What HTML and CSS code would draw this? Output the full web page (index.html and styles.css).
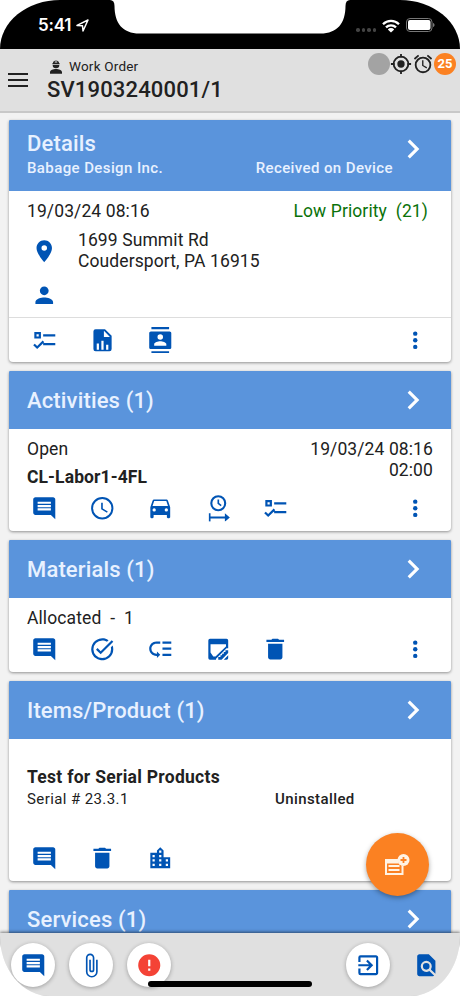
FILE: index.html
```html
<!DOCTYPE html>
<html lang="en">
  <head>
    <meta charset="UTF-8" />
    <meta name="viewport" content="width=device-width, initial-scale=1.0" />
    <title>Work Order</title>
    <link rel="stylesheet" href="styles.css">
  </head>
  <body>
    <!-- Icon set -->
    <svg class="sprite" aria-hidden="true">
      <symbol id="chevron" viewBox="0 0 24 24"><path d="M8.600 16.600 13.200 12 8.600 7.400 10 6l6 6-6 6z" /></symbol>
      <symbol id="more" viewBox="0 0 24 24"><circle cx="12" cy="6" r="2" /><circle cx="12" cy="12" r="2" /><circle cx="12" cy="18" r="2" /></symbol>
      <symbol id="comment" viewBox="0 0 24 24"><path d="M21.99 4c0-1.1-.89-2-1.99-2H4c-1.1 0-2 .9-2 2v12c0 1.1.9 2 2 2h14l4 4-.01-18zM18 14H6v-2h12v2zm0-3H6V9h12v2zm0-3H6V6h12v2z" /></symbol>
      <symbol id="checklist" viewBox="0 0 24 24"><path fill-rule="evenodd" d="M3 4.500h6v6H3zM5 6.500v2h2v-2zM11 6.500h11v2H11zM11 14.500h11v2H11zM2 16.500l1.400-1.400 2.200 2.200L10.600 12.300 12 13.700l-6.400 6.300z" /></symbol>
      <symbol id="place" viewBox="0 0 24 24"><path d="M12 2C8.130 2 5 5.130 5 9c0 5.250 7 13 7 13s7-7.750 7-13c0-3.870-3.130-7-7-7zm0 9.500a2.500 2.500 0 0 1 0-5 2.500 2.500 0 0 1 0 5z" /></symbol>
      <symbol id="person" viewBox="0 0 24 24"><path d="M12 12c2.210 0 4-1.790 4-4s-1.790-4-4-4-4 1.790-4 4 1.790 4 4 4zm0 2c-2.670 0-8 1.340-8 4v2h16v-2c0-2.660-5.330-4-8-4z" /></symbol>
      <symbol id="report" viewBox="0 0 24 24"><path fill-rule="evenodd" d="M6 2h8.500l6 6v12a2 2 0 0 1-2 2H6a2 2 0 0 1-2-2V4a2 2 0 0 1 2-2zM13.500 3.500V9H19zM7 15v5.500h2V15zM11.200 12.500v8h2v-8zM15.500 16v4.500h2V16z" /></symbol>
      <symbol id="contacts" viewBox="0 0 24 24"><path d="M20 0H4v2h16V0zM4 24h16v-2H4v2zM20.500 4h-17C2.700 4 2 4.700 2 5.500v13c0 .800.700 1.500 1.500 1.500h17c.800 0 1.500-.700 1.500-1.500v-13c0-.800-.700-1.500-1.500-1.500zm-8.500 2.500a2.500 2.500 0 0 1 0 5 2.500 2.500 0 0 1 0-5zM17.500 17h-11v-1.500c0-1.670 3.500-2.700 5.500-2.700s5.500 1.030 5.500 2.700V17z" /></symbol>
      <symbol id="clock" viewBox="0 0 24 24"><circle cx="12" cy="12" r="9.200" fill="none" stroke="currentColor" stroke-width="1.800" /><path d="M11 7h1.500v5.250l4.500 2.670-.750 1.230L11 13z" /></symbol>
      <symbol id="car" viewBox="0 0 24 24"><path d="M18.920 5.010C18.720 4.420 18.160 4 17.500 4h-11c-.660 0-1.210.420-1.420 1.010L3 11v9c0 .550.450 1 1 1h1c.550 0 1-.450 1-1v-2h12v2c0 .550.450 1 1 1h1c.550 0 1-.450 1-1v-9l-2.080-5.990zM6.500 15a1.500 1.500 0 0 1 0-3 1.500 1.500 0 0 1 0 3zm11 0a1.500 1.500 0 0 1 0-3 1.500 1.500 0 0 1 0 3zM5 10l1.500-4.500h11L19 10H5z" /></symbol>
      <symbol id="time-span" viewBox="0 0 24 24"><circle cx="12" cy="7.500" r="6.300" fill="none" stroke="currentColor" stroke-width="1.900" /><path d="M11.300 4h1.500v3.300l2.300 1.700-.900 1.200-2.900-2.200zM3.500 16.500H5v3h13v-3l4.500 3.900-4.500 3.900v-3H5v3H3.500z" /></symbol>
      <symbol id="task-done" viewBox="0 0 24 24"><path d="M22 5.180 10.590 16.600l-4.240-4.240 1.410-1.410 2.830 2.830 10-10L22 5.180zM19.790 10.220c.130.570.210 1.160.210 1.780a8 8 0 1 1-8-8c1.580 0 3.040.460 4.280 1.250l1.440-1.440A10 10 0 1 0 22 12c0-1.190-.220-2.330-.600-3.390z" /></symbol>
      <symbol id="low-priority" viewBox="0 0 24 24"><path d="M14 5h8v2h-8zm0 5.500h8v2h-8zm0 5.500h8v2h-8zM2 11.500C2 15.080 4.920 18 8.500 18H9v2l3-3-3-3v2h-.500A4.510 4.510 0 0 1 4 11.500C4 9.020 6.020 7 8.500 7H12V5H8.500C4.920 5 2 7.920 2 11.500z" /></symbol>
      <symbol id="edit-window" viewBox="0 0 24 24"><path fill-rule="evenodd" d="M4.500 2.500h15A1.500 1.500 0 0 1 21 4v7h-1.500L10 20.500v1H4.500A1.500 1.500 0 0 1 3 20V4a1.500 1.500 0 0 1 1.500-1.500zM5 7.500v7.500l2.500 3.500h2l9.500-9V7.500z" /><path d="M21 13v2.500l-6 6h-3V19h2v-1.500h1.500V16H17v-1.500h1.500V13zM21 17.500V20a1.500 1.500 0 0 1-1.500 1.500H17z" /></symbol>
      <symbol id="trash" viewBox="0 0 24 24"><path d="M5.500 19.300c0 1.100.900 2 2 2h9c1.100 0 2-.900 2-2V7h-13v12.300zM20 3.500h-4.500l-1-1h-5l-1 1H4v2h16v-2z" /></symbol>
      <symbol id="city" viewBox="0 0 24 24"><path d="M15 11V5l-3-3-3 3v2H3v14h18V11h-6zm-8 8H5v-2h2v2zm0-4H5v-2h2v2zm0-4H5V9h2v2zm6 8h-2v-2h2v2zm0-4h-2v-2h2v2zm0-4h-2V9h2v2zm0-4h-2V5h2v2zm6 12h-2v-2h2v2zm0-4h-2v-2h2v2z" /></symbol>
      <symbol id="clip" viewBox="0 0 24 24"><path d="M16.600 6.500v10.800a4.600 4.600 0 0 1-9.200 0V4.800a3.100 3.100 0 0 1 6.200 0v10.700a1.600 1.600 0 0 1-3.200 0V6.500" transform="translate(.5 .5)" fill="none" stroke="currentColor" stroke-width="1.500" /></symbol>
      <symbol id="error" viewBox="0 0 24 24"><path d="M12 2a10 10 0 1 0 0 20 10 10 0 0 0 0-20zm1 15h-2v-2h2v2zm0-4h-2V7h2v6z" /></symbol>
      <symbol id="enter" viewBox="0 0 24 24"><path d="M10.090 15.590 11.500 17l5-5-5-5-1.410 1.410L12.670 11H3v2h9.670l-2.580 2.590zM19 3H5a2 2 0 0 0-2 2v4h2V5h14v14H5v-4H3v4a2 2 0 0 0 2 2h14c1.100 0 2-.900 2-2V5c0-1.100-.900-2-2-2z" /></symbol>
      <symbol id="find-page" viewBox="0 0 24 24"><path d="M20.300 19.590V8l-6-6H5.800c-1.100 0-2 .900-2 2v16c0 1.100.900 2 2 2H18c.450 0 .850-.150 1.190-.400l-4.430-4.430c-.800.520-1.740.830-2.760.830a5 5 0 1 1 5-5c0 1.020-.310 1.960-.830 2.750zM9 13a3 3 0 1 0 6 0 3 3 0 0 0-6 0z" /></symbol>
      <symbol id="worker" viewBox="0 0 24 24"><path d="M12 15c-4 0-9 1.500-9 4.700V22h18v-2.300C21 16.500 16 15 12 15zM7 9a5 5 0 0 0 10 0zM11.300 2h1.400v4h1V2.500C15.500 3 16.600 4.500 16.700 6.500h.800V8h-11V6.500h.800C7.400 4.500 8.500 3 10.300 2.500V6h1z" /></symbol>
      <symbol id="gps" viewBox="0 0 24 24"><circle cx="12" cy="12" r="8" fill="none" stroke="currentColor" stroke-width="2" /><circle cx="12" cy="12" r="4" /><path d="M11 1h2v4h-2zM11 19h2v4h-2zM1 11h4v2H1zM19 11h4v2h-4z" /></symbol>
      <symbol id="alarm" viewBox="0 0 24 24"><circle cx="12" cy="13" r="8" fill="none" stroke="currentColor" stroke-width="2" /><path d="m22 5.720-4.600-3.860-1.290 1.530 4.600 3.860zM7.880 3.390 6.600 1.860 2 5.710l1.290 1.530zM12.500 8H11v6l4.750 2.850.750-1.230-4-2.370z" /></symbol>
      <symbol id="add-list" viewBox="0 0 25 22"><path fill-rule="evenodd" d="M0 5h13a6 6 0 0 0 5.500 7v9H0zM2 9.500v9.500h14.500V9.500zM3.500 11h11v2h-11zM3.500 15h11v2h-11z" /><circle cx="18.500" cy="6" r="6" /><path d="M17.600 3h1.800v2.100h2.100v1.800h-2.100V9h-1.800V6.900h-2.100V5.100h2.100z" fill="#fb8122" /></symbol>
    </svg>

    <div class="phone">
      <div class="status-bar">
        <svg class="notch" viewBox="0 0 240 34"><path d="M0 0C3 0 4.500 2 4.500 6c0 17 8 27.500 25 27.500h181c17 0 25-10.500 25-27.500 0-4 1.500-6 4.500-6z" /></svg>
        <div class="status-time">
          <span>5:41</span>
          <svg width="13" height="13" viewBox="0 0 13 13"><path d="M1 6.400 12 1 7 12 6.500 6.700z" fill="none" stroke="#fff" stroke-width="1.500" stroke-linejoin="round" /></svg>
        </div>
        <div class="status-icons">
          <span class="dots"><i></i><i></i><i></i><i></i></span>
          <svg class="wifi" width="18" height="14" viewBox="0 0 18 14"><g fill="none" stroke="#fff" stroke-width="2.300"><path d="M1 5.200a11.300 11.300 0 0 1 16 0" /><path d="M4 8.400a7 7 0 0 1 10 0" /></g><path d="M9 13.500 5.800 10.400a4.500 4.500 0 0 1 6.400 0z" fill="#fff" /></svg>
          <svg width="29" height="15" viewBox="0 0 29 15"><rect x=".5" y=".5" width="25.500" height="13" rx="3.500" fill="none" stroke="#777" /><rect x="2" y="2" width="22.500" height="10" rx="2" fill="#fff" /><path d="M27 5c2 .500 2 3.500 0 4z" fill="#777" /></svg>
        </div>
      </div>

      <header class="app-header">
        <svg class="menu" width="20" height="14" viewBox="0 0 20 14"><path d="M0 0h20v2H0zM0 6h20v2H0zM0 12h20v2H0z" /></svg>
        <div class="heading">
          <div class="subtitle"><svg class="worker"><use href="#worker" /></svg>Work Order</div>
          <h1>SV1903240001/1</h1>
        </div>
        <div class="indicators">
          <span class="dot"></span>
          <svg class="indicator"><use href="#gps" /></svg>
          <svg class="indicator"><use href="#alarm" /></svg>
          <span class="count">25</span>
        </div>
      </header>

      <main class="content">
        <section class="card details">
          <div class="card-header tall">
            <div class="card-titles">
              <h2>Details</h2>
              <div class="card-meta"><span>Babage Design Inc.</span><span>Received on Device</span></div>
            </div>
            <svg class="chevron"><use href="#chevron" /></svg>
          </div>
          <div class="details-body">
            <div class="line"><span>19/03/24 08:16</span><span class="priority">Low Priority&nbsp; (21)</span></div>
            <div class="contact address">
              <svg class="icon"><use href="#place" /></svg>
              <p>1699 Summit Rd<br />Coudersport, PA 16915</p>
            </div>
            <div class="contact"><svg class="icon"><use href="#person" /></svg></div>
          </div>
          <div class="actions">
            <span><svg class="icon"><use href="#checklist" /></svg></span>
            <span><svg class="icon"><use href="#report" /></svg></span>
            <span><svg class="icon"><use href="#contacts" /></svg></span>
            <span class="more"><svg class="icon"><use href="#more" /></svg></span>
          </div>
        </section>

        <section class="card activities">
          <div class="card-header"><h2>Activities (1)</h2><svg class="chevron"><use href="#chevron" /></svg></div>
          <div class="activity-body">
            <div>Open<br /><b>CL-Labor1-4FL</b></div>
            <div class="activity-time">19/03/24 08:16<br />02:00</div>
          </div>
          <div class="actions">
            <span><svg class="icon"><use href="#comment" /></svg></span>
            <span><svg class="icon"><use href="#clock" /></svg></span>
            <span><svg class="icon"><use href="#car" /></svg></span>
            <span><svg class="icon"><use href="#time-span" /></svg></span>
            <span><svg class="icon"><use href="#checklist" /></svg></span>
            <span class="more"><svg class="icon"><use href="#more" /></svg></span>
          </div>
        </section>

        <section class="card materials">
          <div class="card-header"><h2>Materials (1)</h2><svg class="chevron"><use href="#chevron" /></svg></div>
          <div class="material-body">Allocated&nbsp; -&nbsp; 1</div>
          <div class="actions">
            <span><svg class="icon"><use href="#comment" /></svg></span>
            <span><svg class="icon"><use href="#task-done" /></svg></span>
            <span><svg class="icon"><use href="#low-priority" /></svg></span>
            <span><svg class="icon"><use href="#edit-window" /></svg></span>
            <span><svg class="icon"><use href="#trash" /></svg></span>
            <span class="more"><svg class="icon"><use href="#more" /></svg></span>
          </div>
        </section>

        <section class="card items">
          <div class="card-header"><h2>Items/Product (1)</h2><svg class="chevron"><use href="#chevron" /></svg></div>
          <div class="item-body">
            <b>Test for Serial Products</b>
            <div class="item-row"><span>Serial # 23.3.1</span><span class="state">Uninstalled</span></div>
          </div>
          <div class="actions">
            <span><svg class="icon"><use href="#comment" /></svg></span>
            <span><svg class="icon"><use href="#trash" /></svg></span>
            <span><svg class="icon"><use href="#city" /></svg></span>
          </div>
        </section>

        <section class="card">
          <div class="card-header"><h2>Services (1)</h2><svg class="chevron"><use href="#chevron" /></svg></div>
        </section>
      </main>

      <footer class="toolbar">
        <span class="tool"><span class="round"><svg class="icon"><use href="#comment" /></svg></span></span>
        <span class="tool"><span class="round"><svg class="icon"><use href="#clip" /></svg></span></span>
        <span class="tool"><span class="round alert"><svg class="icon"><use href="#error" /></svg></span></span>
        <span class="tool push"><span class="round"><svg class="icon"><use href="#enter" /></svg></span></span>
        <span class="tool"><svg class="icon"><use href="#find-page" /></svg></span>
      </footer>

      <div class="fab"><svg width="25" height="22"><use href="#add-list" /></svg></div>
      <div class="home-bar"></div>
    </div>
  </body>
</html>
```

FILE: styles.css
```css
* {
  margin: 0;
  padding: 0;
  box-sizing: border-box;
}

body {
  background: #fff;
  color: #212121;
  font-family: Roboto, "Liberation Sans", sans-serif;
  font-size: 17.5px;
  line-height: 21px;
  letter-spacing: 0.1px;
}

svg {
  display: block;
  flex-shrink: 0;
  fill: currentColor;
}

.sprite {
  position: absolute;
  width: 0;
  height: 0;
}

.phone {
  position: relative;
  display: flex;
  flex-direction: column;
  width: 460px;
  height: 996px;
  overflow: hidden;
  background: #f2f2f2;
  border-radius: 60px 60px 50px 50px / 49px 49px 60px 60px;
}

/* Status bar */
.status-bar {
  position: relative;
  display: flex;
  justify-content: space-between;
  flex-shrink: 0;
  height: 49px;
  padding: 0 25px 0 38px;
  background: #000;
  color: #fff;
}

.notch {
  position: absolute;
  left: 110px;
  top: 0;
  width: 240px;
  height: 34px;
  fill: #fff;
}

.status-time {
  display: flex;
  align-items: center;
  gap: 5px;
  height: 51px;
  font-family: Inter, sans-serif;
  font-size: 17px;
  font-weight: 600;
  letter-spacing: -0.2px;
}

.status-icons {
  display: flex;
  align-items: center;
  height: 51px;
}

.dots {
  display: flex;
  gap: 2px;
  padding-top: 9px;
  margin-right: 6px;
}

.dots i {
  width: 3.5px;
  height: 3.5px;
  border-radius: 50%;
  background: #444;
}

.wifi {
  margin-right: 6px;
}

/* App header */
.app-header {
  display: flex;
  flex-shrink: 0;
  height: 64px;
  padding-left: 8px;
  background: #e0e0e0;
  border-bottom: 2px solid #c8c8c8;
}

.menu {
  margin-top: 24px;
}

.heading {
  margin-left: 19px;
  padding-top: 7px;
}

.subtitle {
  display: flex;
  align-items: center;
  height: 21px;
  font-size: 13.5px;
  letter-spacing: 0.2px;
}

.worker {
  width: 16px;
  height: 16px;
  margin: 0 5px 0 1px;
}

h1 {
  font-size: 22px;
  font-weight: 500;
  line-height: 26px;
  letter-spacing: 0.16px;
}

.indicators {
  display: flex;
  align-items: flex-start;
  margin: 4px 4px 0 auto;
}

.dot,
.count {
  width: 22px;
  height: 22px;
  border-radius: 50%;
}

.dot {
  background: #a3a3a3;
}

.indicator {
  width: 22px;
  height: 22px;
}

.count {
  background: #fb8122;
  color: #fff;
  font-size: 13px;
  font-weight: 700;
  line-height: 22px;
  text-align: center;
}

/* Cards */
.content {
  flex: 1;
  display: flex;
  flex-direction: column;
  gap: 9px;
  min-height: 0;
  padding: 7px 9px 0;
  overflow: hidden;
}

.card {
  display: flex;
  flex-direction: column;
  flex-shrink: 0;
  background: #fff;
  border-radius: 1px 1px 4px 4px;
  box-shadow: 0 1px 3px rgba(0, 0, 0, 0.4);
}

.card-header {
  display: flex;
  align-items: center;
  justify-content: space-between;
  flex-shrink: 0;
  height: 58px;
  padding: 0 19px 0 18px;
  background: #5a94dc;
  border-radius: 1px 1px 0 0;
  color: #e8f1ff;
}

.card-header.tall {
  align-items: flex-start;
  height: 71px;
  padding-top: 10px;
}

.card-titles {
  width: 366px;
}

h2 {
  padding-top: 1px;
  font-size: 22px;
  font-weight: 500;
  line-height: 25px;
  letter-spacing: 0.15px;
}

.card-meta {
  display: flex;
  justify-content: space-between;
  margin-top: 2px;
  font-size: 15px;
  font-weight: 500;
  line-height: 20px;
  letter-spacing: 0.4px;
}

.chevron {
  width: 38px;
  height: 38px;
  color: #fff;
}

.icon {
  width: 26.5px;
  height: 26.5px;
  color: #0054b4;
}

.actions {
  display: flex;
  flex: 1;
  align-items: center;
  padding: 0 7px 0 6.5px;
}

.actions span {
  display: flex;
  justify-content: center;
  width: 57.8px;
}

.actions .more {
  margin-left: auto;
}

.details {
  height: 242px;
}

.details-body {
  flex-shrink: 0;
  height: 127px;
  padding: 10px 23px 0 18px;
  border-bottom: 1px solid #ddd;
}

.line {
  display: flex;
  justify-content: space-between;
}

.priority {
  color: #0a720a;
}

.contact {
  display: flex;
  align-items: center;
  height: 31px;
  padding-left: 4px;
}

.address {
  height: 58px;
  gap: 20.5px;
}

.contact + .contact {
  height: 30px;
}

.activities {
  height: 160px;
}

.activity-body {
  display: flex;
  justify-content: space-between;
  flex-shrink: 0;
  height: 57px;
  padding: 10px 18px 0 18px;
}

.activity-body b {
  line-height: 34px;
}

.activity-time {
  text-align: right;
}

.materials {
  height: 132px;
}

.material-body {
  flex-shrink: 0;
  height: 29px;
  padding: 10px 18px 0;
}

.items {
  height: 200px;
}

.item-body {
  flex-shrink: 0;
  height: 97px;
  padding: 28px 18px 0;
}

.item-body b {
  letter-spacing: 0.28px;
}

.item-row {
  display: grid;
  grid-template-columns: 248px 1fr;
  padding-top: 1px;
  font-size: 15px;
  letter-spacing: 0.4px;
}

.state {
  font-weight: 500;
}

/* Bottom toolbar */
.toolbar {
  display: flex;
  flex-shrink: 0;
  height: 63px;
  padding: 10px 5px 0 4.6px;
  background: #e0e0e0;
  box-shadow: 0 -1px 3px rgba(0, 0, 0, 0.5);
  z-index: 1;
}

.tool {
  display: flex;
  align-items: center;
  justify-content: center;
  width: 57.8px;
  height: 44px;
}

.push {
  margin-left: auto;
}

.round {
  display: flex;
  align-items: center;
  justify-content: center;
  width: 44px;
  height: 44px;
  border-radius: 50%;
  background: #fff;
  box-shadow: 0 1px 4px rgba(0, 0, 0, 0.3);
}

.alert .icon {
  color: #f44336;
}

.fab {
  position: absolute;
  left: 366px;
  top: 833px;
  display: flex;
  align-items: center;
  justify-content: center;
  width: 63px;
  height: 63px;
  border-radius: 50%;
  background: #fb8122;
  color: #fff3e4;
  box-shadow: 0 2px 5px rgba(0, 0, 0, 0.35);
}

.home-bar {
  position: absolute;
  left: 148px;
  bottom: 9px;
  width: 164px;
  height: 6px;
  border-radius: 3px;
  background: #000;
  z-index: 2;
}
```
